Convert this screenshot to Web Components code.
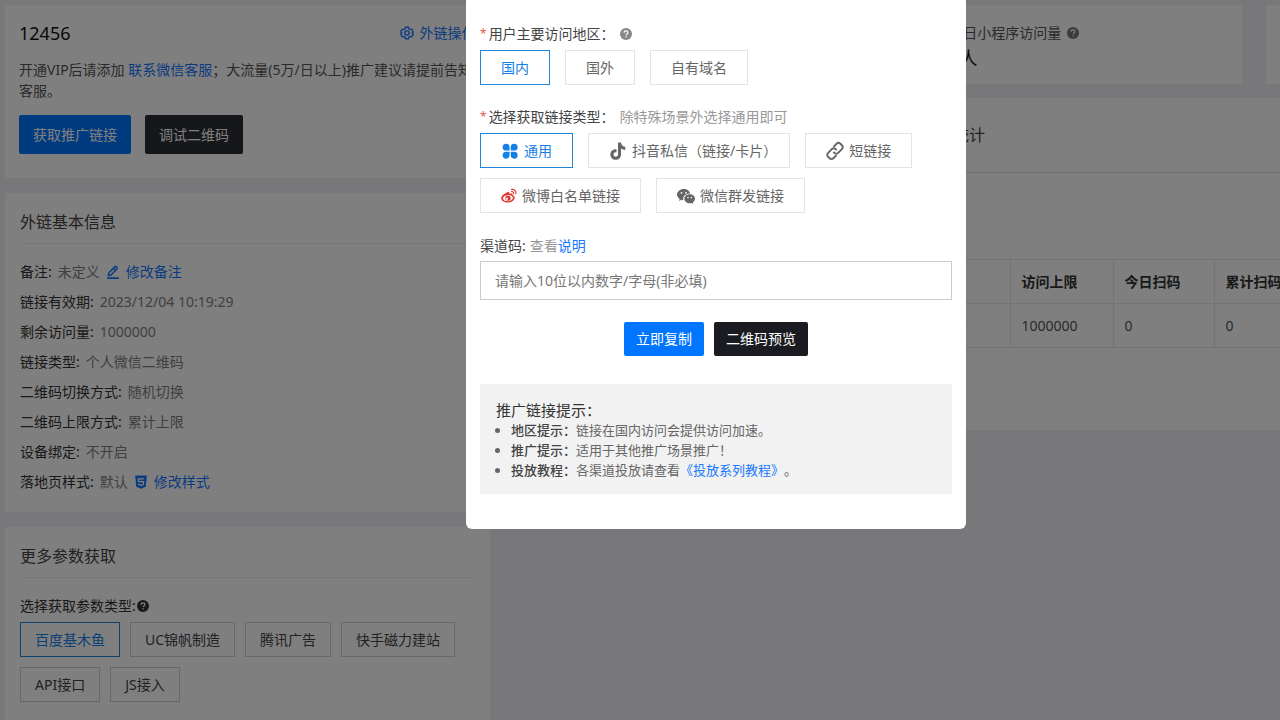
<!DOCTYPE html>
<html lang="zh-CN">
<head>
<meta charset="utf-8">
<meta name="viewport" content="width=device-width, initial-scale=1">
<title>外链管理</title>
<style>
html, body { margin: 0; height: 100%; }
body {
  --blue: #1677ff; --primary: #0075ff; --dark: #2b2e37; --line: #e6e6e6; --page: #f0f1f5;
  overflow: hidden; background: var(--page); color: #333;
  font: 14px/20px "Noto Sans", "Noto Sans CJK SC", sans-serif;
}
</style>
</head>
<body>
<link-app></link-app>
<script>
function define(name, html, setup) {
  const tpl = document.createElement('template');
  tpl.innerHTML = html.trim();
  customElements.define(name, class extends HTMLElement {
    constructor() {
      super();
      this.attachShadow({ mode: 'open' }).append(tpl.content.cloneNode(true));
    }
    connectedCallback() { if (setup) setup(this, this.shadowRoot); }
  });
}

const ICONS = {
  help: '<circle cx="12" cy="12" r="12" fill="currentColor"/><path d="M8.2 9.3c0-2.3 1.7-3.7 3.9-3.7s3.8 1.3 3.8 3.3c0 2.9-3.6 2.8-3.6 5.3" fill="none" stroke="var(--mark,#fff)" stroke-width="2.5"/><circle cx="12.2" cy="17.6" r="1.6" fill="var(--mark,#fff)"/>',
  gear: '<g fill="none" stroke="currentColor" stroke-width="2.4" stroke-linejoin="round"><path d="M9.3 1.6h5.4l.8 3.2 2.2 1.3 3.2-.9 2.5 4.5-2.3 2.3 2.3 2.3-2.5 4.5-3.2-.9-2.2 1.3-.8 3.2H9.3l-.8-3.2-2.2-1.3-3.2.9-2.5-4.5L2.9 12 .6 9.7l2.5-4.5 3.2.9 2.2-1.3z" transform="translate(.6 .6) scale(.95)"/><circle cx="12" cy="12" r="3.6"/></g>',
  edit: '<g fill="none" stroke="currentColor" stroke-width="2.6" stroke-linejoin="round"><path d="M5 13.4 15.4 2.8c1.4-1.4 5 2.1 3.7 3.6L8.6 17 3.8 18.2z"/><path d="M12.8 5.6l3.8 3.8M2 22.5h20"/></g>',
  html5: '<path d="M2 1h20l-1.8 19L12 23.5 3.8 20z" fill="currentColor"/><path d="M17 6.5H7.5l.5 5h8.4l-.5 5-3.9 1.3-3.9-1.3-.1-1.6" fill="none" stroke="#fff" stroke-width="2.2"/>',
  clover: '<g fill="currentColor"><path d="M11.400 11.400H6.600a4.600 4.600 0 1 1 4.800-4.800zM13 11.400V6.600a4.600 4.600 0 1 1 4.800 4.800zM11.400 13v4.800a4.600 4.600 0 1 1-4.800-4.800zM13 13h4.800a4.600 4.600 0 1 1-4.800 4.800z"/></g>',
  douyin: '<path fill="currentColor" d="M12 .5h4.100c.3 3.300 2.300 5.500 5.600 5.800v4.200c-2.100 0-4-.6-5.600-1.700v7.400c0 4.600-3.200 7.500-7.100 7.500-4.100 0-7.200-3.100-7.200-7.100 0-4.300 3.600-7.600 8.200-7v4.300c-2.200-.6-4 .8-4 2.700 0 1.700 1.400 2.900 3 2.900 1.800 0 3-1.300 3-3.200z"/>',
  chain: '<g fill="none" stroke="currentColor" stroke-width="2.6" stroke-linejoin="round"><path d="M10 6.500l4.200-4.200c1.500-1.500 3.600-1.300 5 .1l2 2c1.500 1.500 1.500 3.700 0 5.100l-5 5c-1.500 1.500-3.700 1.500-5.100 0l-1.300-1.300"/><path d="M14 17.500l-4.200 4.200c-1.500 1.500-3.600 1.300-5-.1l-2-2c-1.500-1.500-1.500-3.700 0-5.100l5-5c1.500-1.500 3.700-1.500 5.100 0l1.300 1.300"/></g>',
  weibo: '<g fill="#e0392b"><path fill-rule="evenodd" d="M9.700 6.300c1.700-.6 3.500 0 2.900 2.400 2.200-.9 5.200-1 4.700 1.800 1.900.6 3.200 1.900 3.200 3.700 0 3.800-4.700 7.600-10.600 7.600C4.700 21.800.3 19.200.3 15.400c0-3.500 5.300-7.900 9.400-9.100zM10.300 10.700c-4.200.2-7.500 2.500-7.300 5.100.2 2.500 3.500 4.200 7.600 3.900 4.200-.3 7.400-2.600 7.200-5.200-.2-2.500-3.400-4-7.500-3.800z"/><path fill-rule="evenodd" d="M10.500 11.800a4 3.600 0 1 0 .1 7.200 4 3.600 0 0 0-.1-7.200zM9 14.500a1.600 1.500 0 1 1 0 3 1.600 1.500 0 0 1 0-3z"/></g><path d="M15.500 2.200c4-1 7.600 2.200 6.900 6.500M15.800 5.500c2-.3 3.500 1.100 3.200 3.100" fill="none" stroke="#e0392b" stroke-width="1.700" stroke-linecap="round"/>',
  wechat: '<path fill="currentColor" d="M9 2.600c4.500 0 8 2.800 8.600 6.200-5.200-.2-9.400 3.100-9.400 7.200 0 .5.100 1 .2 1.500-1 0-1.700-.1-2.600-.4l-3 1.600.8-2.700C1.500 14.700 0 12.500 0 10.100 0 5.900 4.100 2.600 9 2.600z"/><path fill="currentColor" d="M17 9.800c4 0 7 2.600 7 6 0 1.900-1.100 3.500-2.800 4.700l.6 2.200-2.400-1.300c-.8.200-1.600.4-2.400.4-4 0-7.200-2.700-7.200-6s3.200-6 7.200-6z"/><g fill="#fff"><circle cx="6" cy="7.700" r="1.200"/><circle cx="12" cy="7.700" r="1.200"/><circle cx="14.700" cy="13.900" r="1"/><circle cx="19.300" cy="13.900" r="1"/></g>'
};

define('ui-icon', `
<style>
:host { display: inline-flex; width: 14px; height: 14px; flex: none; }
svg { width: 100%; height: 100%; display: block; overflow: visible; }
</style><svg viewBox="0 0 24 24" aria-hidden="true"></svg>`,
(el, root) => { root.querySelector('svg').innerHTML = ICONS[el.getAttribute('name')]; });

define('ui-link', `
<style>
:host { display: inline; }
a { color: var(--blue); text-decoration: none; }
</style><a href="#"><slot></slot></a>`);

/* Bordered choice button; [selected] marks the current choice. */
define('choice-chip', `
<style>
:host { display: block; --pad: 20px; --end: var(--pad); }
:host([compact]) { --pad: 14px; --edge: #d0d0d0; }
/* a closing full-width bracket already carries blank space */
:host([bracket-end]) { --end: 12px; }
button {
  display: flex; align-items: center; gap: 5px; box-sizing: border-box; height: 35px;
  padding: 0 var(--end) 0 var(--pad); border: 1px solid var(--edge, #e4e4e4); background: none;
  color: inherit; font: inherit; white-space: nowrap; cursor: pointer;
}
:host([selected]) button { border-color: #2385d9; color: #1480e6; }
</style><button type="button"><slot name="icon"></slot><slot></slot></button>`,
(el, root) => root.querySelector('button').setAttribute('aria-pressed', el.hasAttribute('selected')));

define('action-button', `
<style>
:host { display: block; }
button {
  height: 39px; padding: 0 14px; border: 0; border-radius: 2px; background: var(--primary);
  color: #fff; font: inherit; white-space: nowrap; cursor: pointer;
}
:host([dark]) button { background: var(--dark); }
:host([small]) button { height: 34px; padding: 0 12px; }
</style><button type="button"><slot></slot></button>`);

define('info-card', `
<style>
:host { display: block; background: #fff; padding: 8px 15px 15px; }
h2 { margin: 0 0 14px; font-size: 16px; line-height: 42px; font-weight: 400; color: #444; box-shadow: 0 1px #eee; }
</style><h2><slot name="title"></slot></h2><slot></slot>`);

define('info-row', `
<style>
:host { display: flex; align-items: center; gap: 6px; height: 30px; }
.value { display: flex; align-items: center; gap: 6px; color: #808080; }
</style><span><slot name="label"></slot></span><span class="value"><slot></slot></span>`);

define('link-header', `
<style>
:host { display: block; background: #fff; padding: 14px 14px 24px; }
.top { display: flex; justify-content: space-between; align-items: center; height: 28px; }
h1 { margin: 0; font-size: 18px; line-height: 28px; font-weight: 400; color: #111; }
.tools { display: flex; align-items: center; gap: 6px; }
.tools ui-icon { color: var(--blue); }
p { margin: 12px 0 14px; line-height: 21px; color: #555; }
.actions { display: flex; gap: 14px; }
</style>
<div class="top"><h1>12456</h1><div class="tools"><ui-icon name="gear"></ui-icon><ui-link>外链操作</ui-link></div></div>
<p>开通VIP后请添加 <ui-link>联系微信客服</ui-link>；大流量(5万/日以上)推广建议请提前告知<span>客服。</span></p>
<div class="actions"><action-button>获取推广链接</action-button><action-button dark>调试二维码</action-button></div>`);

define('param-picker', `
<style>
:host { display: block; }
.label { display: flex; align-items: center; gap: 1px; height: 30px; margin-bottom: 1px; }
ui-icon { width: 12px; height: 12px; }
.chips { display: flex; flex-wrap: wrap; gap: 10px; color: #444; }
</style>
<div class="label">选择获取参数类型:<ui-icon name="help"></ui-icon></div>
<div class="chips">
<choice-chip compact selected>百度基木鱼</choice-chip><choice-chip compact>UC锦帆制造</choice-chip>
<choice-chip compact>腾讯广告</choice-chip><choice-chip compact>快手磁力建站</choice-chip>
<choice-chip compact>API接口</choice-chip><choice-chip compact>JS接入</choice-chip>
</div>`);

define('stat-card', `
<style>
:host { display: block; box-sizing: border-box; height: 79px; padding: 18px 15px 0 64px; background: #fff; white-space: nowrap; overflow: hidden; }
.name { display: flex; align-items: center; gap: 6px; color: #555; }
ui-icon { width: 12px; height: 12px; color: #777; }
.value { font-size: 18px; line-height: 30px; color: #111; }
</style>
<div class="name"><slot></slot><ui-icon name="help"></ui-icon></div><div class="value"><slot name="value"></slot></div>`);

define('stats-panel', `
<style>
:host { display: block; box-sizing: border-box; padding: 0 0 82px 15px; background: #fff; overflow: hidden; }
h2 {
  display: grid; grid-template-columns: 57% 1fr; margin: 0 0 86px; border-bottom: 1px solid #ddd;
  font-size: 16px; line-height: 74px; font-weight: 400; color: #444;
}
h2 span { grid-column: 2; }
table { table-layout: fixed; width: 797px; border-collapse: collapse; }
th, td { box-sizing: border-box; height: 44px; padding: 0 11px; border: 1px solid #e6e6e6; text-align: left; white-space: nowrap; }
th { color: #333; font-weight: 700; }
td { color: #555; }
.name { width: 301px; } .time { width: 189px; } .limit { width: 103px; } .today { width: 101px; } .total { width: 103px; }
</style>
<h2><span>统计</span></h2>
<table>
<thead><tr><th class="name"></th><th class="time"></th><th class="limit">访问上限</th><th class="today">今日扫码</th><th class="total">累计扫码</th></tr></thead>
<tbody><tr><td></td><td>2023/12/04 10:19:29</td><td>1000000</td><td>0</td><td>0</td></tr></tbody>
</table>`);

define('field-label', `
<style>
:host { display: flex; align-items: center; gap: 5px; height: 32px; color: #444; }
.star { color: #e55; margin-right: 2px; font-size: 12px; }
.text { display: flex; align-items: center; }
</style><span class="text"><span class="star">*</span><slot></slot></span><slot name="after"></slot>`);

define('channel-field', `
<style>
:host { display: block; }
label { color: #444; }
.row { display: flex; gap: 4px; height: 30px; align-items: center; }
.hint { color: #999; }
input {
  display: block; box-sizing: border-box; width: 100%; height: 39px; padding: 0 14px;
  border: 1px solid #ccc; background: #fff; color: #333; font: inherit; outline: 0;
}
input::placeholder { color: #777; opacity: 1; }
</style>
<div class="row"><label for="channel">渠道码:</label><span class="hint">查看<ui-link>说明</ui-link></span></div>
<input id="channel" type="text" maxlength="10" placeholder="请输入10位以内数字/字母(非必填)">`);

define('tips-box', `
<style>
:host { display: block; padding: 16px 16px 14px; background: #f2f2f2; color: #666; font-size: 13px; text-spacing-trim: space-all; }
h3 { margin: 0; font-size: 15px; line-height: 20px; font-weight: 400; color: #333; }
ul { margin: 0; padding: 0 0 0 15px; }
li { line-height: 20px; }
b { font-weight: 500; color: #444; }
</style>
<h3>推广链接提示：</h3>
<ul>
<li><b>地区提示：</b>链接在国内访问会提供访问加速。</li>
<li><b>推广提示：</b>适用于其他推广场景推广！</li>
<li><b>投放教程：</b>各渠道投放请查看<ui-link>《投放系列教程》</ui-link>。</li>
</ul>`);

define('link-dialog', `
<style>
:host { position: fixed; inset: 0; display: flex; justify-content: center; align-items: flex-start; padding-left: 152px; background: rgba(0, 0, 0, .5); }
section { box-sizing: border-box; width: 500px; max-width: 100%; padding: 18px 14px 35px; border-radius: 0 0 6px 6px; background: #fff; }
.chips { display: flex; flex-wrap: wrap; gap: 10px 15px; color: #666; }
.region { margin-bottom: 16px; }
.types { margin-bottom: 18px; }
.help { width: 12px; height: 12px; color: #888; }
.hint { color: #999; }
.wide { width: 18px; height: 18px; }
.round { width: 16px; height: 16px; }
.actions { display: flex; justify-content: center; gap: 10px; margin: 22px 0 28px; --dark: #1b1c21; }
</style>
<section role="dialog" aria-modal="true" aria-label="获取推广链接">
<field-label>用户主要访问地区：<ui-icon class="help" slot="after" name="help"></ui-icon></field-label>
<div class="chips region"><choice-chip selected>国内</choice-chip><choice-chip>国外</choice-chip><choice-chip>自有域名</choice-chip></div>
<field-label>选择获取链接类型：<span class="hint" slot="after">除特殊场景外选择通用即可</span></field-label>
<div class="chips types">
<choice-chip selected><ui-icon class="wide" slot="icon" name="clover"></ui-icon>通用</choice-chip>
<choice-chip bracket-end><ui-icon class="wide" slot="icon" name="douyin"></ui-icon>抖音私信（链接/卡片）</choice-chip>
<choice-chip><ui-icon class="wide" slot="icon" name="chain"></ui-icon>短链接</choice-chip>
<choice-chip><ui-icon class="round" slot="icon" name="weibo"></ui-icon>微博白名单链接</choice-chip>
<choice-chip><ui-icon class="wide" slot="icon" name="wechat"></ui-icon>微信群发链接</choice-chip>
</div>
<channel-field></channel-field>
<div class="actions"><action-button small>立即复制</action-button><action-button small dark>二维码预览</action-button></div>
<tips-box></tips-box>
</section>`);

define('link-app', `
<style>
:host { display: block; height: 100%; }
main { display: grid; grid-template-columns: 38% minmax(0, 1fr); gap: 15px; min-height: 100%; box-sizing: border-box; padding: 5px 0 0 5px; }
.side { display: flex; flex-direction: column; gap: 15px; }
.side > :last-child { flex: 1; }
.stats { display: grid; grid-template-columns: repeat(3, 46%); gap: 24px; overflow: hidden; margin-bottom: 14px; }
info-row ui-icon { color: var(--blue); }
</style>
<main>
<div class="side">
<link-header></link-header>
<info-card><span slot="title">外链基本信息</span>
<info-row><span slot="label">备注:</span>未定义<ui-icon name="edit"></ui-icon><ui-link>修改备注</ui-link></info-row>
<info-row><span slot="label">链接有效期:</span>2023/12/04 10:19:29</info-row>
<info-row><span slot="label">剩余访问量:</span>1000000</info-row>
<info-row><span slot="label">链接类型:</span>个人微信二维码</info-row>
<info-row><span slot="label">二维码切换方式:</span>随机切换</info-row>
<info-row><span slot="label">二维码上限方式:</span>累计上限</info-row>
<info-row><span slot="label">设备绑定:</span>不开启</info-row>
<info-row><span slot="label">落地页样式:</span>默认<ui-icon name="html5"></ui-icon><ui-link>修改样式</ui-link></info-row>
</info-card>
<info-card><span slot="title">更多参数获取</span><param-picker></param-picker></info-card>
</div>
<div>
<div class="stats">
<stat-card></stat-card>
<stat-card>今日小程序访问量<span slot="value">0人</span></stat-card>
<stat-card></stat-card>
</div>
<stats-panel></stats-panel>
</div>
</main>
<link-dialog></link-dialog>`);
</script>
</body>
</html>
